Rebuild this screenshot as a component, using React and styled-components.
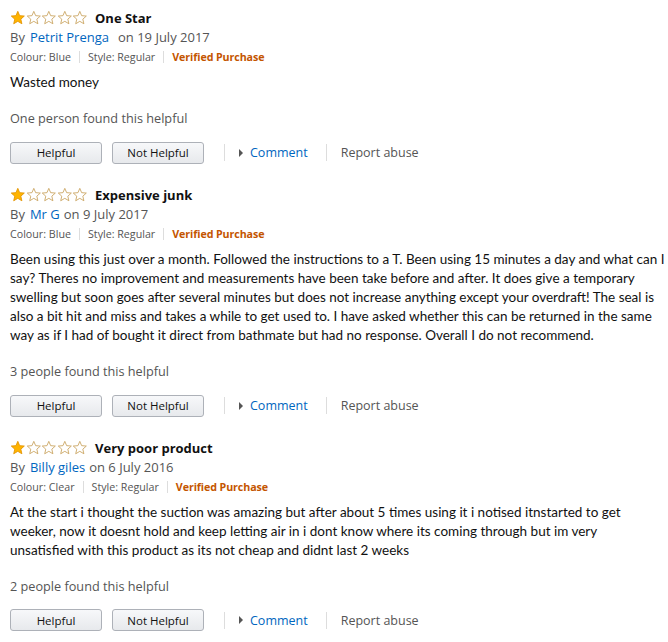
import React from "react";
import styled, { createGlobalStyle } from "styled-components";

const Global = createGlobalStyle`
  html, body { margin: 0; padding: 0; background: #fff; }
  body { font-family: Lato, "Open Sans", sans-serif; color: #111; }
`;

const Page = styled.div`
  padding: 8px 2px 0 10px;
  width: 668px;
  box-sizing: border-box;
`;

const Review = styled.div`
  display: flex;
  flex-direction: column;
  & + & { margin-top: 21px; }
`;

const Header = styled.div`
  display: flex;
  align-items: center;
  height: 20px;
`;

const Stars = styled.div`
  display: flex;
  width: 78px;
  margin-right: 7px;
`;

const Title = styled.span`
  font-family: "Open Sans", sans-serif;
  font-weight: 700;
  font-size: 13px;
  color: #111;
`;

const Byline = styled.div`
  font-family: "Open Sans", sans-serif;
  font-size: 13px;
  line-height: 19px;
  color: #555;
`;

const Author = styled.span`
  color: #0066c0;
  margin: 0 ${(p) => p.$gap || 4}px 0 5px;
`;

const Meta = styled.div`
  display: flex;
  align-items: center;
  height: 20px;
  font-family: "Open Sans", sans-serif;
  font-size: 10.7px;
  color: #555;
`;

const MetaSep = styled.span`
  width: 1px;
  height: 12px;
  background: #ddd;
  margin: 0 8px;
`;

const Verified = styled.span`
  color: #c45500;
  font-weight: 700;
  letter-spacing: -0.1px;
`;

const Body = styled.p`
  margin: 6px 0 0;
  max-width: ${(p) => p.$measure || 656}px;
  font-size: 13.5px;
  line-height: 19.1px;
  color: #111;
`;

const HelpfulCount = styled.div`
  margin-top: 17px;
  font-family: "Open Sans", sans-serif;
  font-size: 12.7px;
  line-height: 19px;
  color: #555;
`;

const Actions = styled.div`
  display: flex;
  align-items: center;
  margin-top: 13.5px;
  height: 22px;
`;

const VoteButton = styled.button`
  width: 92px;
  height: 22px;
  box-sizing: border-box;
  border: 1px solid #adb1b8;
  border-radius: 3px;
  background: linear-gradient(to bottom, #f7f8fa, #e7e9ec);
  font-family: "Open Sans", sans-serif;
  font-size: 11.5px;
  color: #111;
  padding: 0;
  & + & { margin-left: 10px; }
`;

const ActionSep = styled.span`
  width: 1px;
  height: 17px;
  background: #ddd;
  margin: 0 ${(p) => p.$right}px 0 ${(p) => p.$left}px;
`;

const CommentLink = styled.span`
  display: flex;
  align-items: center;
  font-family: "Open Sans", sans-serif;
  font-size: 12.5px;
  color: #0066c0;
`;

const Caret = styled.span`
  width: 0;
  height: 0;
  border-top: 4px solid transparent;
  border-bottom: 4px solid transparent;
  border-left: 4px solid #555;
  margin-right: 7px;
`;

const Report = styled.span`
  font-family: "Open Sans", sans-serif;
  font-size: 12.5px;
  color: #555;
`;

const Star = ({ filled }) => (
  <svg width="16" height="16" viewBox="0 0 16 16">
    <path
      d="M8 1.2 L9.9 5.6 L14.7 6 L11.1 9.2 L12.2 13.9 L8 11.4 L3.8 13.9 L4.9 9.2 L1.3 6 L6.1 5.6 Z"
      fill={filled ? "#ffb400" : "#fff"}
      stroke={filled ? "#e29400" : "#c9a45f"}
      strokeWidth="0.9"
      strokeLinejoin="round"
    />
  </svg>
);

const reviews = [
  {
    title: "One Star",
    author: "Petrit Prenga",
    gap: 9,
    date: "on 19 July 2017",
    colour: "Blue",
    body: "Wasted money",
    helpful: "One person found this helpful",
  },
  {
    title: "Expensive junk",
    author: "Mr G",
    gap: 4,
    date: "on 9 July 2017",
    colour: "Blue",
    body:
      "Been using this just over a month. Followed the instructions to a T. Been using 15 minutes a day and what can I say? Theres no improvement and measurements have been take before and after. It does give a temporary swelling but soon goes after several minutes but does not increase anything except your overdraft! The seal is also a bit hit and miss and takes a while to get used to. I have asked whether this can be returned in the same way as if I had of bought it direct from bathmate but had no response. Overall I do not recommend.",
    helpful: "3 people found this helpful",
  },
  {
    title: "Very poor product",
    author: "Billy giles",
    gap: 4,
    date: "on 6 July 2016",
    colour: "Clear",
    measure: 640,
    body:
      "At the start i thought the suction was amazing but after about 5 times using it i notised itnstarted to get weeker, now it doesnt hold and keep letting air in i dont know where its coming through but im very unsatisfied with this product as its not cheap and didnt last 2 weeks",
    helpful: "2 people found this helpful",
  },
];

export default function App() {
  return (
    <>
      <Global />
      <Page>
        {reviews.map((r) => (
          <Review key={r.title}>
            <Header>
              <Stars>
                {[0, 1, 2, 3, 4].map((i) => (
                  <Star key={i} filled={i === 0} />
                ))}
              </Stars>
              <Title>{r.title}</Title>
            </Header>
            <Byline>
              By<Author $gap={r.gap}>{r.author}</Author>{r.date}
            </Byline>
            <Meta>
              <span>Colour: {r.colour}</span>
              <MetaSep />
              <span>Style: Regular</span>
              <MetaSep />
              <Verified>Verified Purchase</Verified>
            </Meta>
            <Body $measure={r.measure}>{r.body}</Body>
            <HelpfulCount>{r.helpful}</HelpfulCount>
            <Actions>
              <VoteButton>Helpful</VoteButton>
              <VoteButton>Not Helpful</VoteButton>
              <ActionSep $left={20} $right={14} />
              <CommentLink>
                <Caret />
                Comment
              </CommentLink>
              <ActionSep $left={18} $right={14} />
              <Report>Report abuse</Report>
            </Actions>
          </Review>
        ))}
      </Page>
    </>
  );
}
